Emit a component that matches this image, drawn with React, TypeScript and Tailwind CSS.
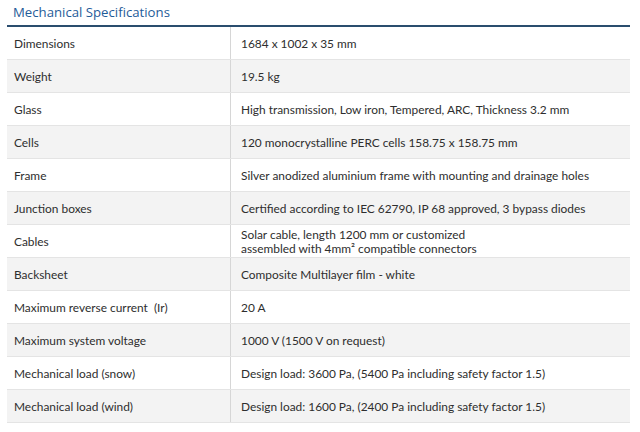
const specs: [string, string[]][] = [
  ["Dimensions", ["1684 x 1002 x 35 mm"]],
  ["Weight", ["19.5 kg"]],
  ["Glass", ["High transmission, Low iron, Tempered, ARC, Thickness 3.2 mm"]],
  ["Cells", ["120 monocrystalline PERC cells 158.75 x 158.75 mm"]],
  ["Frame", ["Silver anodized aluminium frame with mounting and drainage holes"]],
  ["Junction boxes", ["Certified according to IEC 62790, IP 68 approved, 3 bypass diodes"]],
  ["Cables", ["Solar cable, length 1200 mm or customized", "assembled with 4mm² compatible connectors"]],
  ["Backsheet", ["Composite Multilayer film - white"]],
  ["Maximum reverse current  (Ir)", ["20 A"]],
  ["Maximum system voltage", ["1000 V (1500 V on request)"]],
  ["Mechanical load (snow)", ["Design load: 3600 Pa, (5400 Pa including safety factor 1.5)"]],
  ["Mechanical load (wind)", ["Design load: 1600 Pa, (2400 Pa including safety factor 1.5)"]],
];

export default function App() {
  return (
    <div className="w-[640px] h-[432px] bg-white pl-[7px] pr-[10px] font-['Lato',sans-serif] text-[#2e2e2e]">
      <h2 className="h-[27px] pl-[6px] pt-[3px] text-[13.2px] text-[#1f5c99] font-['Open_Sans',sans-serif] border-b-2 border-[#2a4d6e] leading-[18px]">
        Mechanical Specifications
      </h2>
      <div>
        {specs.map(([label, value], i) => (
          <div
            key={label}
            className={`grid grid-cols-[223px_1fr] h-[33px] border-b border-[#e4e4e4] text-[11.9px] ${
              i % 2 === 1 ? "bg-[#f3f3f3]" : "bg-white"
            }`}
          >
            <div className="flex items-center pl-[7px] pt-[2px] whitespace-pre">{label}</div>
            <div className="flex flex-col justify-center pl-[10px] pt-[2px] border-l border-[#d6d6d6] leading-[14px]">
              {value.map((line) => (
                <span key={line}>{line}</span>
              ))}
            </div>
          </div>
        ))}
      </div>
    </div>
  );
}
